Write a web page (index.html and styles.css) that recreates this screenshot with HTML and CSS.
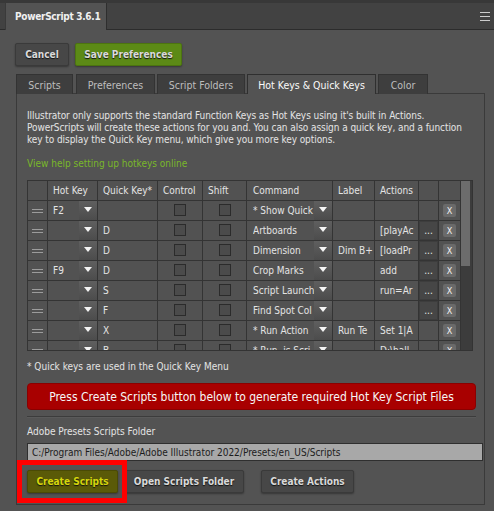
FILE: index.html
```html
<!DOCTYPE html>
<html>
<head>
<meta charset="utf-8">
<link rel="stylesheet" href="styles.css">
</head>
<body>
<div class="header">
  <div class="htab">PowerScript 3.6.1</div>
  <div class="menu"><span></span><span></span><span></span></div>
</div>
<div class="main">
  <div class="topbtns">
    <button class="btn cancel">Cancel</button>
    <button class="btn green">Save Preferences</button>
  </div>
  <div class="tabs">
    <div class="tab t1">Scripts</div>
    <div class="tab t2">Preferences</div>
    <div class="tab t3">Script Folders</div>
    <div class="tab t4 active">Hot Keys &amp; Quick Keys</div>
    <div class="tab t5">Color</div>
  </div>
  <div class="panel">
    <p class="intro">Illustrator only supports the standard Function Keys as Hot Keys using it's built in Actions.<br>PowerScripts will create these actions for you and. You can also assign a quick key, and a function<br>key to display the Quick Key menu, which give you more key options.</p>
    <div class="link">View help setting up hotkeys online</div>
    <div class="tbl">
      <div class="clip">
        <div class="grid">
          <div class="c"></div><div class="c">Hot Key</div><div class="c">Quick Key*</div><div class="c">Control</div><div class="c">Shift</div><div class="c cmd">Command</div><div class="c">Label</div><div class="c">Actions</div><div class="c"></div><div class="c"></div>

          <div class="c drag"><i></i><i></i></div><div class="c sel"><span>F2</span><b></b></div><div class="c"></div><div class="c mid"><u></u></div><div class="c mid"><u></u></div><div class="c sel cmd"><span>* Show Quick</span><b></b></div><div class="c"></div><div class="c"></div><div class="c"></div><div class="c mid"><em>X</em></div>

          <div class="c drag"><i></i><i></i></div><div class="c sel"><span></span><b></b></div><div class="c">D</div><div class="c mid"><u></u></div><div class="c mid"><u></u></div><div class="c sel cmd"><span>Artboards</span><b></b></div><div class="c"></div><div class="c act">[playAc</div><div class="c dots">...</div><div class="c mid"><em>X</em></div>

          <div class="c drag"><i></i><i></i></div><div class="c sel"><span></span><b></b></div><div class="c">D</div><div class="c mid"><u></u></div><div class="c mid"><u></u></div><div class="c sel cmd"><span>Dimension</span><b></b></div><div class="c lbl">Dim B+</div><div class="c act">[loadPr</div><div class="c dots">...</div><div class="c mid"><em>X</em></div>

          <div class="c drag"><i></i><i></i></div><div class="c sel"><span>F9</span><b></b></div><div class="c">D</div><div class="c mid"><u></u></div><div class="c mid"><u></u></div><div class="c sel cmd"><span>Crop Marks</span><b></b></div><div class="c"></div><div class="c act">add</div><div class="c dots">...</div><div class="c mid"><em>X</em></div>

          <div class="c drag"><i></i><i></i></div><div class="c sel"><span></span><b></b></div><div class="c">S</div><div class="c mid"><u></u></div><div class="c mid"><u></u></div><div class="c sel cmd"><span>Script Launch</span><b></b></div><div class="c"></div><div class="c act">run=Ar</div><div class="c dots">...</div><div class="c mid"><em>X</em></div>

          <div class="c drag"><i></i><i></i></div><div class="c sel"><span></span><b></b></div><div class="c">F</div><div class="c mid"><u></u></div><div class="c mid"><u></u></div><div class="c sel cmd"><span>Find Spot Col</span><b></b></div><div class="c"></div><div class="c"></div><div class="c dots">...</div><div class="c mid"><em>X</em></div>

          <div class="c drag"><i></i><i></i></div><div class="c sel"><span></span><b></b></div><div class="c">X</div><div class="c mid"><u></u></div><div class="c mid"><u></u></div><div class="c sel cmd"><span>* Run Action</span><b></b></div><div class="c lbl">Run Te</div><div class="c act">Set 1|A</div><div class="c"></div><div class="c mid"><em>X</em></div>

          <div class="c drag"><i></i><i></i></div><div class="c sel"><span></span><b></b></div><div class="c">B</div><div class="c mid"><u></u></div><div class="c mid"><u></u></div><div class="c sel cmd"><span>* Run .js Scri</span><b></b></div><div class="c"></div><div class="c act">D:\hall</div><div class="c"></div><div class="c mid"><em>X</em></div>
        </div>
      </div>
      <div class="scroll"><div class="thumb"></div></div>
    </div>
    <p class="note">* Quick keys are used in the Quick Key Menu</p>
    <div class="banner">Press Create Scripts button below to generate required Hot Key Script Files</div>
    <div class="sep"></div>
    <div class="flabel">Adobe Presets Scripts Folder</div>
    <div class="path">C:/Program Files/Adobe/Adobe Illustrator 2022/Presets/en_US/Scripts</div>
    <div class="bottombtns">
      <div class="hl"><button class="btn olive">Create Scripts</button></div>
      <button class="btn open">Open Scripts Folder</button>
      <button class="btn createact">Create Actions</button>
    </div>
  </div>
</div>
</body>
</html>
```

FILE: styles.css
```css
* { box-sizing: border-box; }
html, body { margin: 0; padding: 0; }
body {
  width: 494px;
  height: 511px;
  overflow: hidden;
  background: #535353;
  font-family: "DejaVu Sans Condensed", "DejaVu Sans", sans-serif;
  font-size: 10px;
  color: #e4e4e4;
}
.header {
  height: 30px;
  background: #424242;
  border-top: 3px solid #383838;
  border-bottom: 1px solid #2c2c2c;
  display: flex;
  padding-left: 5px;
}
.htab {
  width: 102px;
  margin-bottom: -1px;
  background: #535353;
  border-left: 1px solid #3a3a3a;
  border-right: 1px solid #2e2e2e;
  display: flex;
  align-items: center;
  padding-left: 9px;
  font-weight: bold;
  letter-spacing: -0.3px;
  color: #f0f0f0;
}
.menu {
  margin-left: auto;
  margin-right: 4px;
  width: 10px;
  display: flex;
  flex-direction: column;
  justify-content: center;
  gap: 3px;
}
.menu span { height: 1px; background: #cdcdcd; }

.main { padding: 13px 0 0 15px; }
.topbtns { display: flex; gap: 6px; }
.btn {
  height: 23px;
  padding: 0;
  font-family: inherit;
  font-size: 10px;
  font-weight: bold;
  color: #dadada;
  text-shadow: 0 1px 1px #111;
  background: #474747;
  border: 1px solid #3a3a3a;
  border-radius: 2px;
  box-shadow: 0 1px 2px rgba(0,0,0,0.35);
}
.cancel { width: 54px; }
.green { width: 107px; background: #5c8a16; border-color: #4c7410; }

.tabs { display: flex; margin: 8px 0 -1px 1px; position: relative; z-index: 1; }
.tab {
  height: 20px;
  background: #3e3e3e;
  border: 1px solid #333;
  border-bottom: none;
  color: #bdbdbd;
  display: flex;
  align-items: center;
  justify-content: center;
  font-size: 10.5px;
}
.t1 { width: 57px; margin-right: 3px; }
.t2 { width: 79px; margin-right: 2px; }
.t3 { width: 88px; margin-right: 2px; }
.t4 { width: 129px; margin-right: 2px; }
.t5 { width: 50px; }
.tab.active { background: #535353; color: #fafafa; border-color: #2f2f2f; }

.panel {
  margin-left: 1px;
  width: 469px;
  height: 412px;
  border: 1px solid #3a3a3a;
  padding: 16px 8px 0 10px;
}
.intro { margin: 0; line-height: 12px; white-space: nowrap; letter-spacing: -0.07px; }
.link { margin-top: 12px; line-height: 12px; color: #7ab82a; }

.tbl { display: flex; height: 171px; margin-top: 10px; }
.clip { width: 434px; height: 171px; overflow: hidden; border-bottom: 1px solid #333; }
.grid {
  display: grid;
  grid-template-columns: 19px 49px 59px 44px 43px 85px 41px 43px 19px 21px;
  grid-auto-rows: 19px;
  gap: 1px;
  padding: 1px;
  background: #343434;
}
.c {
  background: #525252;
  padding: 0 5px;
  display: flex;
  align-items: center;
  white-space: nowrap;
  overflow: hidden;
  min-width: 0;
}
.c.cmd { padding-left: 6px; }
.c.mid { justify-content: center; padding: 0; }
.drag { flex-direction: column; justify-content: center; gap: 2px; padding: 0; }
.drag i { display: block; width: 11px; height: 1px; background: #9c9c9c; }
.sel { padding-right: 0; justify-content: space-between; }
.sel span { overflow: hidden; flex: 1; }
.sel b {
  flex: none;
  width: 18px;
  height: 19px;
  background: linear-gradient(#5f5f5f, #4c4c4c);
  position: relative;
}
.sel b::after {
  content: "";
  position: absolute;
  left: 5px;
  top: 6px;
  border-left: 4px solid transparent;
  border-right: 4px solid transparent;
  border-top: 5px solid #f4f4f4;
}
.c u {
  display: block;
  width: 12px;
  height: 12px;
  margin-top: -2px;
  border: 1px solid #2b2b2b;
  background: #4b4b4b;
}
.c em {
  font-style: normal;
  width: 13px;
  height: 13px;
  border-radius: 2px;
  background: #6a6a6a;
  color: #f2f2f2;
  font-size: 9px;
  display: flex;
  align-items: center;
  justify-content: center;
}
.dots {
  background: #464646;
  box-shadow: inset 0 0 0 1px #3d3d3d;
  justify-content: center;
  padding: 0;
  color: #e8e8e8;
}
.scroll {
  width: 12px;
  height: 171px;
  background: #3c3c3c;
  border-top: 1px solid #333;
  border-right: 1px solid #333;
  border-bottom: 1px solid #333;
}
.thumb { width: 9px; height: 85px; background: #6c6c6c; }

.note { margin: 10px 0 0 0; line-height: 12px; }
.banner {
  margin-top: 10px;
  height: 27px;
  width: 449px;
  background: #a80000;
  border: 1px solid #8a0000;
  border-radius: 4px;
  color: #f6f6f6;
  font-size: 12px;
  display: flex;
  align-items: center;
  justify-content: center;
}
.sep {
  margin-top: 6px;
  width: 449px;
  height: 2px;
  border-top: 1px solid #3c3c3c;
  border-bottom: 1px solid #5a5a5a;
}
.flabel { margin-top: 8px; line-height: 12px; }
.path {
  margin-top: 5px;
  width: 456px;
  height: 18px;
  background: #a8a8a8;
  border: 1px solid #2f2f2f;
  color: #1c1c1c;
  padding-left: 4px;
  display: flex;
  align-items: center;
  white-space: nowrap;
}
.bottombtns { display: flex; margin-top: 9px; }
.hl { position: relative; }
.hl::after {
  content: "";
  position: absolute;
  left: -10px;
  right: -9px;
  top: -10px;
  bottom: -10px;
  border: 5px solid #ff0000;
}
.olive { width: 91px; background: #5a5a08; border-color: #4a4a05; color: #d6d60c; }
.open { width: 120px; margin-left: 6px; }
.createact { width: 93px; margin-left: 17px; }
```
